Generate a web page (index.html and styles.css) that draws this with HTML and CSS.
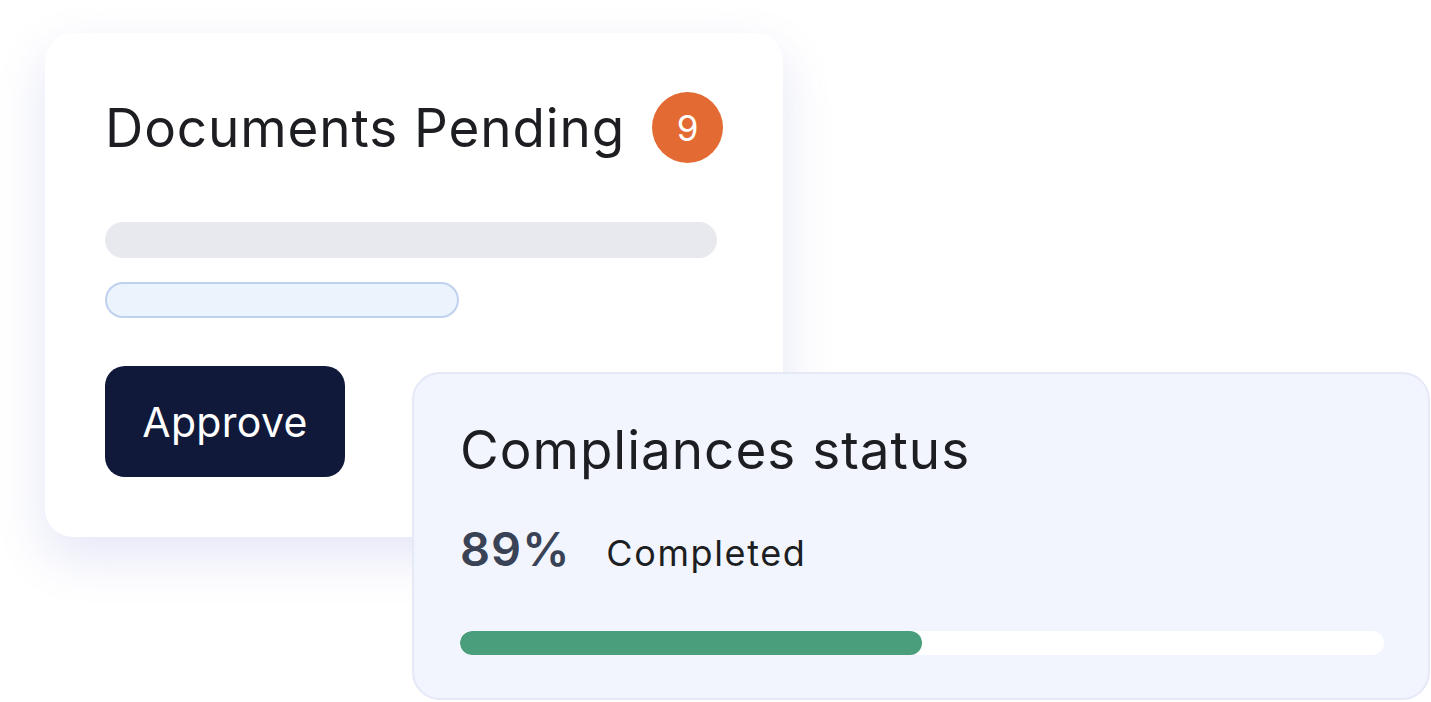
FILE: index.html
```html
<!DOCTYPE html>
<html lang="en">
<head>
<meta charset="utf-8">
<title>Documents</title>
<link rel="stylesheet" href="styles.css">
</head>
<body>
<div class="stage">
  <section class="card pending">
    <div class="title-row">
      <h2 class="title">Documents Pending</h2>
      <span class="badge">9</span>
    </div>
    <div class="bar-gray"></div>
    <div class="bar-blue"></div>
    <button class="approve">Approve</button>
  </section>
  <section class="card status">
    <h2 class="status-title">Compliances status</h2>
    <div class="stat-row">
      <span class="pct">89%</span>
      <span class="label">Completed</span>
    </div>
    <div class="track"><div class="fill" style="width: 50%"></div></div>
  </section>
</div>
</body>
</html>
```
FILE: styles.css
```css
* { box-sizing: border-box; }
html, body { margin: 0; padding: 0; background: #ffffff; }
body { font-family: Inter, "Noto Sans", sans-serif; color: #1d1e22; width: 1431px; height: 702px; overflow: hidden; }
.stage { padding: 33px 0 0 45px; }
.card { border-radius: 28px; }
.pending {
  width: 738px; height: 504px; background: #fff;
  padding: 59px 0 0 60px;
  box-shadow: 0 20px 50px rgba(88, 98, 200, 0.16);
}
.title-row { display: flex; align-items: center; gap: 27px; height: 71px; }
.title { margin: 0; font-weight: 400; font-size: 53px; letter-spacing: 0.9px; color: #1d1e22; line-height: 60px; }
.badge {
  width: 71px; height: 71px; border-radius: 50%; background: #e36a32; color: #fff;
  display: flex; align-items: center; justify-content: center; font-size: 35px;
}
.bar-gray { margin-top: 59px; width: 612px; height: 36px; border-radius: 18px; background: #e8e9ee; }
.bar-blue { margin-top: 24px; width: 354px; height: 36px; border-radius: 18px; background: #ebf3fc; border: 2px solid #bfd1ee; }
.approve {
  display: block; margin-top: 48px; width: 240px; height: 111px; border: 0; border-radius: 20px;
  background: #10193a; color: #fff; font-family: Inter, sans-serif; font-size: 41px; padding: 0; letter-spacing: 0.3px;
}
.status {
  margin: -165px 0 0 367px; width: 1018px; height: 328px; position: relative;
  background: #f2f5fe; border: 2px solid #e5e8f6; padding: 46px 0 0 46px;
}
.status-title { margin: 0; font-weight: 400; font-size: 53px; letter-spacing: 1px; color: #1d1e22; line-height: 60px; }
.stat-row { display: flex; align-items: baseline; gap: 36px; margin-top: 40px; }
.pct { font-size: 47px; font-weight: 600; color: #3a4356; letter-spacing: 1px; }
.label { font-size: 36px; color: #1d1e22; letter-spacing: 1.6px; }
.track { margin-top: 54px; width: 924px; height: 24px; border-radius: 12px; background: #fff; overflow: hidden; }
.fill { height: 100%; background: #4b9e7c; border-radius: 12px; }
```
